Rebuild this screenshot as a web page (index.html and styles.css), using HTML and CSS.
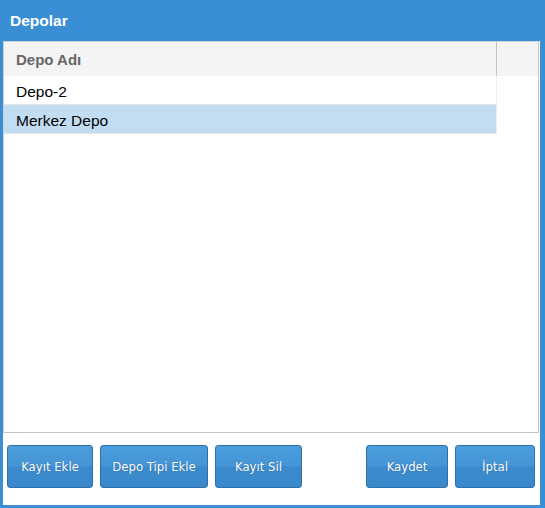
FILE: index.html
```html
<!DOCTYPE html>
<html lang="tr">
<head>
<meta charset="utf-8">
<title>Depolar</title>
<link rel="stylesheet" href="styles.css">
</head>
<body>
<div class="window">
  <div class="titlebar">Depolar</div>
  <div class="content">
    <div class="grid">
      <div class="grid-header">
        <div class="hcell">Depo Adı</div>
        <div class="hfill"></div>
      </div>
      <div class="grid-body">
        <div class="row">
          <div class="cell">Depo-2</div>
        </div>
        <div class="row selected">
          <div class="cell">Merkez Depo</div>
        </div>
      </div>
    </div>
    <div class="toolbar">
      <button class="btn w-ekle">Kayıt Ekle</button>
      <button class="btn w-tipi">Depo Tipi Ekle</button>
      <button class="btn w-sil">Kayıt Sil</button>
      <button class="btn w-kaydet push">Kaydet</button>
      <button class="btn w-iptal">İptal</button>
    </div>
  </div>
</div>
</body>
</html>
```

FILE: styles.css
```css
html, body {
  margin: 0;
  padding: 0;
}
body {
  width: 545px;
  height: 508px;
  background: #3a8fd4;
  font-family: "Liberation Sans", Arial, sans-serif;
  overflow: hidden;
}
.window {
  display: flex;
  flex-direction: column;
  height: 508px;
}
.titlebar {
  height: 40px;
  padding: 1px 0 0 10px;
  line-height: 40px;
  color: #ffffff;
  font-weight: bold;
  font-size: 15.5px;
}
.content {
  flex: 1;
  margin: 0 5px 3px 3px;
  background: #ffffff;
  display: flex;
  flex-direction: column;
}
.grid {
  width: 534px;
  height: 390px;
  border: 1px solid #cfcfcf;
  border-right-color: #c4c4c4;
  border-bottom-color: #c4c4c4;
  display: flex;
  flex-direction: column;
}
.grid-header {
  display: flex;
  height: 34px;
  background: #f4f4f4;
}
.hcell {
  width: 480px;
  padding: 2px 0 0 12px;
  line-height: 32px;
  font-weight: bold;
  font-size: 15px;
  color: #666666;
  border-right: 1px solid #c4c4c4;
}
.hfill {
  flex: 1;
}
.grid-body {
  flex: 1;
}
.row {
  display: flex;
}
.cell {
  width: 480px;
  height: 25px;
  padding: 3px 0 0 12px;
  line-height: 25px;
  font-size: 15.5px;
  color: #000000;
  border-right: 1px solid #ececec;
  border-bottom: 1px solid #e6e6e6;
}
.row.selected .cell {
  background: #c2ddf2;
}
.toolbar {
  display: flex;
  gap: 7px;
  padding: 12px 5px 0 4px;
}
.btn {
  height: 43px;
  border: 1px solid #2c72b2;
  border-radius: 3px;
  background: linear-gradient(#4c9ddc 0%, #4595d6 48%, #3b8bcc 52%, #3a88c9 100%);
  color: #ffffff;
  font-family: "DejaVu Sans Condensed", "DejaVu Sans", sans-serif;
  font-size: 13px;
  text-shadow: 0 0 1px rgba(0, 40, 90, 0.5);
  padding: 0;
  text-align: center;
}
.w-ekle { width: 86px; }
.w-tipi { width: 108px; }
.w-sil { width: 87px; }
.w-kaydet { width: 82px; }
.w-iptal { width: 80px; }
.push { margin-left: auto; }
```
